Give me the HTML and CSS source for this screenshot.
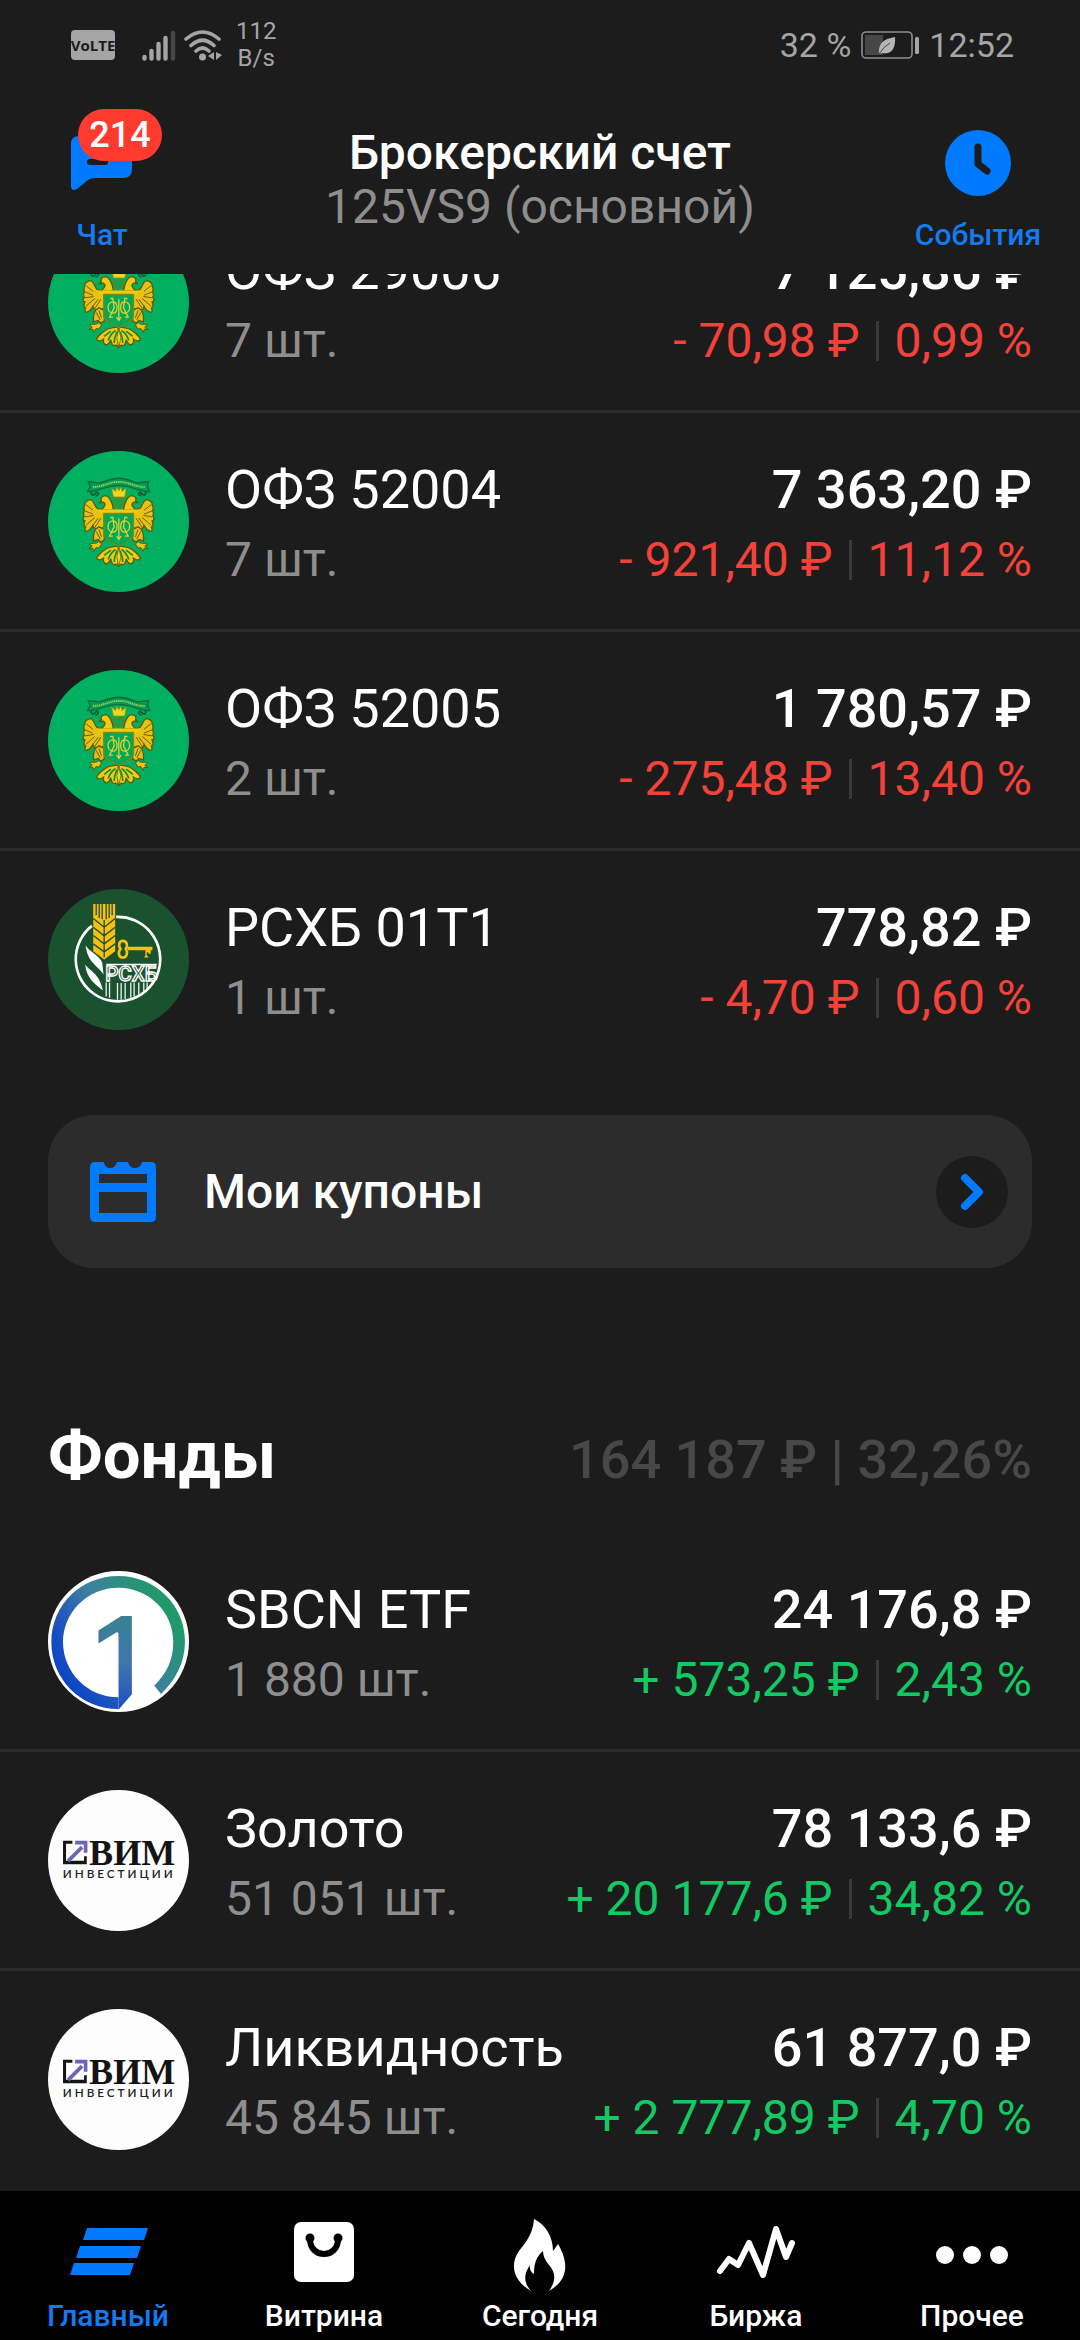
FILE: index.html
```html
<!DOCTYPE html>
<html lang="ru">
<head>
<meta charset="utf-8">
<meta name="viewport" content="width=device-width, initial-scale=1">
<title>Брокерский счет</title>
<link rel="stylesheet" href="styles.css">
</head>
<body>
<svg class="defs" aria-hidden="true">
  <defs>
    <linearGradient id="ring" x1="0.1" y1="0.8" x2="0.9" y2="0.25">
      <stop offset="0" stop-color="#0a45c4"/>
      <stop offset="0.25" stop-color="#2155bd"/>
      <stop offset="0.55" stop-color="#3d7fa0"/>
      <stop offset="1" stop-color="#1f9a68"/>
    </linearGradient>
    <linearGradient id="one" x1="0" y1="0" x2="0" y2="1">
      <stop offset="0" stop-color="#38828f"/>
      <stop offset="0.5" stop-color="#3e77ab"/>
      <stop offset="1" stop-color="#1c50c4"/>
    </linearGradient>
    <symbol id="wing" viewBox="0 0 540 540">
      <path d="M224 236C212 240 200 238 197 230C192 220 188 210 182 208C170 208 162 218 164 224C158 232 162 238 162 242C158 250 160 254 162 258C156 266 158 272 164 272C160 284 160 290 166 291C162 300 164 304 170 303C180 300 184 294 188 286C190 292 192 296 196 296C206 300 216 296 222 290V252Z" fill="#e8c212" stroke="#5a5a10" stroke-width="4"/>
      <path d="M168 224L188 240M164 242L188 252M164 260L190 256M166 286L194 262M180 296L204 264M194 292L212 264" stroke="#6a5c0e" stroke-width="3" fill="none"/>
      <path d="M206 290C192 296 188 312 190 332L204 328L212 336L222 330C224 314 222 308 222 298Z" fill="#e3bf18" stroke="#5a5a10" stroke-width="4"/>
      <path d="M198 304L210 326M206 298L214 320" stroke="#6a5c0e" stroke-width="3" fill="none"/>
      <path d="M206 334C198 344 186 336 178 342L186 348L176 356L188 354L190 364L198 352L206 354L214 342Z" fill="#e9c514" stroke="#5a5a10" stroke-width="3"/>
      <path d="M250 240C248 220 238 196 224 196C214 198 210 206 214 212L206 218L220 216C230 222 222 230 212 240Z" fill="#f2cb10" stroke="#5a5a10" stroke-width="4"/>
      <path d="M264 348C236 348 222 358 212 368C206 376 198 378 200 386C208 394 214 388 220 384C218 396 224 404 232 400C238 396 240 390 242 386C242 398 250 408 256 402L264 408Z" fill="#f2cb10" stroke="#5a5a10" stroke-width="4"/>
      <path d="M256 358C244 366 238 376 234 388M260 362C254 376 252 388 252 396M242 360L222 376" stroke="#0b8f45" stroke-width="5" fill="none"/>
      <path d="M186 182C180 188 184 196 190 194L200 186C208 188 204 196 196 198" stroke="#0d5a30" stroke-width="5" fill="none"/>
    </symbol>
    <symbol id="arms" viewBox="53 62 424 424">
      <rect x="53" y="62" width="424" height="424" fill="#00b060"/>
      <use href="#wing" width="540" height="540"/>
      <g transform="matrix(-1 0 0 1 530 0)"><use href="#wing" width="540" height="540"/></g>
      <path d="M174 154L206 158C230 152 244 144 266 144C288 144 302 152 324 158L356 154L352 166L358 184C326 186 308 166 266 166C224 166 204 186 172 184L180 168Z" fill="#079a50" stroke="#0b6a38" stroke-width="4"/>
      <path d="M188 171C224 168 236 155 266 155C296 155 308 168 344 171" stroke="#8fcf5f" stroke-width="6" stroke-dasharray="4 2" fill="none"/>
      <path d="M250 200L244 174L256 184L260 170L266 182L272 170L276 184L288 174L284 200Z" fill="#f6d51a" stroke="#a08a10" stroke-width="2"/>
      <path d="M252 206H280V220L266 234L252 220Z" fill="#0aa555" stroke="#7a7a10" stroke-width="4"/>
      <path d="M200 238H332L318 250H214Z" fill="#f2cb10"/>
      <path d="M221 250H310V316C310 330 284 336 266 350C248 336 221 330 221 316Z" fill="#00a859" stroke="#7a8a12" stroke-width="4"/>
      <path d="M250 272C228 270 228 306 250 306C264 304 264 274 250 272ZM282 272C304 270 304 306 282 306C268 304 268 274 282 272ZM240 262H248L252 290L238 318H248M292 262H284L280 290L294 318H284M266 264V328M259 318L266 328L273 318" stroke="#e2d02c" stroke-width="4" fill="none"/>
      <path d="M266 352L260 380L266 410L272 380Z" fill="#f6d51a" stroke="#5a5a10" stroke-width="2"/>
    </symbol>
    <symbol id="rshb" viewBox="53 57 424 424">
      <rect x="53" y="57" width="424" height="424" fill="#1a5230"/>
      <path d="M258 141A127 127 0 1 1 185 168" fill="none" stroke="#fff" stroke-width="8"/>
      <path d="M189 102H255V244L222 269L189 244Z" fill="#f9bf12"/>
      <path d="M198 102V136M207 102V144M216 102V148M228 102V148M237 102V144M246 102V136M222 150V262M189 146L222 172L255 146M189 172L222 198L255 172M189 197L222 222L255 197M189 222L222 246L255 222" fill="none" stroke="#1a5230" stroke-width="4"/>
      <path d="M166 226C176 246 204 252 216 278L220 314C206 290 172 280 166 226ZM165 284C178 304 208 310 218 362C196 344 168 326 165 284Z" fill="#fff"/>
      <path d="M278 213C266 213 264 228 271 237C262 248 266 263 278 263C290 263 294 248 287 237C294 228 290 213 278 213Z" fill="none" stroke="#f9bf12" stroke-width="8"/>
      <path d="M292 231H367V241H362V252H355V247H350V256L356 263H342L346 256V241H292Z" fill="#f9bf12"/>
      <text x="225" y="334" class="rshb-text">РСХБ</text>
      <path d="M228 338V380M238 338V384M262 340V390M273 340V390M285 340V388M302 338V384M312 338V380M326 338V374M341 338V364M351 338V356" stroke="#e9f1ec" stroke-width="4" fill="none"/>
      <path d="M228 284H380" stroke="#fff" stroke-width="4"/>
    </symbol>
    <symbol id="sbcn" viewBox="53 59 422 422">
      <rect x="53" y="59" width="422" height="422" fill="#fff"/>
      <path d="M264 74C373 74 463 160 463 270C463 334 434 386 391 427L371 402C406 368 428 328 428 271C428 180 353 109 264 109C172 109 98 182 98 272C98 362 172 437 264 437V472C150 472 63 382 63 272C63 160 152 74 264 74Z" fill="url(#ring)"/>
      <path d="M264 474V248Q264 240 256 244L204 276V237L272 194H304V428Z" fill="url(#one)"/>
    </symbol>
    <symbol id="vim" viewBox="53 59 422 422">
      <rect x="53" y="59" width="422" height="422" fill="#fdfdfd"/>
      <path d="M126 211H98V281H169V257H161V271H117L107 271V220H126Z" fill="#141414"/>
      <path d="M113 272L155 230" stroke="#6a68b4" stroke-width="11"/>
      <path d="M134 211H171V247H160V222H134Z" fill="#6a68b4"/>
      <text x="176" y="282" class="vim-text">ВИМ</text>
      <text x="97" y="322" class="vim-sub">ИНВЕСТИЦИИ</text>
    </symbol>
  </defs>
</svg>

<div class="top">
  <div class="status">
    <svg class="volte" viewBox="0 0 44 30" role="img" aria-label="VoLTE"><rect width="44" height="30" rx="4" fill="#a5a5a5"/><text x="22" y="21" class="volte-text">VoLTE</text></svg>
    <svg class="signal" viewBox="0 0 34 31" aria-hidden="true"><path d="M2.500 27V28.500M9.500 21V28.500M16.500 14V28.500M23.500 8V28.500" stroke="#a5a5a5" stroke-width="4.400" stroke-linecap="round"/><path d="M31 3V28.500" stroke="#474747" stroke-width="4.400" stroke-linecap="round"/></svg>
    <svg class="wifi" viewBox="0 0 38 31" aria-hidden="true"><g fill="none" stroke="#a5a5a5" stroke-width="3.600" stroke-linecap="round"><path d="M2 9Q18.500 -5 35 9M7 15.500Q18.500 5 30 15.500M12 21Q18.500 15 25 21"/></g><circle cx="18.500" cy="27" r="3.500" fill="#a5a5a5"/><path d="M30 22V30L24 26ZM32 22L38 25L32 30Z" fill="#a5a5a5"/></svg>
    <div class="speed">112<br>B/s</div>
    <span class="percent">32 %</span>
    <svg class="battery" viewBox="0 0 58 28" aria-hidden="true"><rect x="1" y="1" width="50" height="26" rx="4" fill="none" stroke="#8d8d8d" stroke-width="1.600"/><rect x="4" y="4" width="18" height="20" fill="#474747"/><rect x="54" y="6" width="4" height="17" rx="1.500" fill="#a5a5a5"/><path d="M18 23C17 13 22 8 34 6C35 18 30 24 21 22Z" fill="#b5b5b5"/><path d="M18 23Q23 15 29 12" stroke="#474747" fill="none"/></svg>
    <time>12:52</time>
  </div>
  <header class="header">
    <button class="action" type="button">
      <span class="action-icon">
        <svg viewBox="0 0 66 66" aria-hidden="true"><path d="M10 6H55Q63 6 63 14V39Q63 48 54 48H26Q22 48 19 50L8 59Q2 62 2 56V14Q2 6 10 6Z" fill="#007aff"/><path d="M21 32H36" stroke="#1c1c1c" stroke-width="6" stroke-linecap="round"/></svg>
        <span class="badge">214</span>
      </span>
      <span>Чат</span>
    </button>
    <div class="account">
      <h1>Брокерский счет</h1>
      <p>125VS9 (основной)</p>
    </div>
    <button class="action" type="button">
      <span class="action-icon">
        <svg viewBox="0 0 66 66" aria-hidden="true"><circle cx="33" cy="33" r="33" fill="#007aff"/><path d="M33 17V34L42 41" fill="none" stroke="#1c1c1c" stroke-width="7" stroke-linecap="round" stroke-linejoin="round"/></svg>
      </span>
      <span>События</span>
    </button>
  </header>
</div>

<main>
  <ul class="list bonds">
    <li class="row">
      <svg class="logo" aria-hidden="true"><use href="#arms"/></svg>
      <div class="info"><div class="name">ОФЗ 29006</div><div class="qty">7 шт.</div></div>
      <div class="sum"><div class="value">7 125,86 ₽</div><div class="change down"><span>- 70,98 ₽</span><i></i><span>0,99 %</span></div></div>
    </li>
    <li class="row">
      <svg class="logo" aria-hidden="true"><use href="#arms"/></svg>
      <div class="info"><div class="name">ОФЗ 52004</div><div class="qty">7 шт.</div></div>
      <div class="sum"><div class="value">7 363,20 ₽</div><div class="change down"><span>- 921,40 ₽</span><i></i><span>11,12 %</span></div></div>
    </li>
    <li class="row">
      <svg class="logo" aria-hidden="true"><use href="#arms"/></svg>
      <div class="info"><div class="name">ОФЗ 52005</div><div class="qty">2 шт.</div></div>
      <div class="sum"><div class="value">1 780,57 ₽</div><div class="change down"><span>- 275,48 ₽</span><i></i><span>13,40 %</span></div></div>
    </li>
    <li class="row">
      <svg class="logo" aria-hidden="true"><use href="#rshb"/></svg>
      <div class="info"><div class="name">РСХБ 01Т1</div><div class="qty">1 шт.</div></div>
      <div class="sum"><div class="value">778,82 ₽</div><div class="change down"><span>- 4,70 ₽</span><i></i><span>0,60 %</span></div></div>
    </li>
  </ul>

  <button class="coupons" type="button">
    <svg class="coupons-icon" viewBox="0 0 66 60" aria-hidden="true"><path fill-rule="evenodd" d="M5 0H14C15 8 25 8 27 0H38C40 8 50 8 52 0H61Q66 0 66 5V55Q66 60 61 60H5Q0 60 0 55V5Q0 0 5 0ZM9 12V21H57V12ZM9 30V51H57V30Z" fill="#007aff"/></svg>
    <span>Мои купоны</span>
    <svg class="chevron" viewBox="0 0 72 72" aria-hidden="true"><circle cx="36" cy="36" r="36" fill="#1c1c1c"/><path d="M29 22L43 36L29 50" fill="none" stroke="#007aff" stroke-width="8" stroke-linecap="round" stroke-linejoin="round"/></svg>
  </button>

  <div class="section-head">
    <h2>Фонды</h2>
    <span>164 187 ₽ | 32,26%</span>
  </div>

  <ul class="list">
    <li class="row">
      <svg class="logo" aria-hidden="true"><use href="#sbcn"/></svg>
      <div class="info"><div class="name">SBCN ETF</div><div class="qty">1 880 шт.</div></div>
      <div class="sum"><div class="value">24 176,8 ₽</div><div class="change up"><span>+ 573,25 ₽</span><i></i><span>2,43 %</span></div></div>
    </li>
    <li class="row">
      <svg class="logo" aria-hidden="true"><use href="#vim"/></svg>
      <div class="info"><div class="name">Золото</div><div class="qty">51 051 шт.</div></div>
      <div class="sum"><div class="value">78 133,6 ₽</div><div class="change up"><span>+ 20 177,6 ₽</span><i></i><span>34,82 %</span></div></div>
    </li>
    <li class="row">
      <svg class="logo" aria-hidden="true"><use href="#vim"/></svg>
      <div class="info"><div class="name">Ликвидность</div><div class="qty">45 845 шт.</div></div>
      <div class="sum"><div class="value">61 877,0 ₽</div><div class="change up"><span>+ 2 777,89 ₽</span><i></i><span>4,70 %</span></div></div>
    </li>
  </ul>
</main>

<nav class="tabs">
  <a href="#main" class="active"><svg viewBox="0 0 80 80" aria-hidden="true"><path d="M19 17H80L76 29H15ZM12 35H73L69 47H8ZM6 52H66L62 64H2Z" fill="#007aff"/></svg>Главный</a>
  <a href="#shop"><svg viewBox="0 0 80 80" aria-hidden="true"><rect x="10" y="11" width="60" height="60" rx="7" fill="#fff"/><path d="M26 28C26 48 54 48 54 28" fill="none" stroke="#000" stroke-width="6"/><circle cx="26" cy="27" r="4.500"/><circle cx="54" cy="27" r="4.500"/></svg>Витрина</a>
  <a href="#today"><svg viewBox="0 0 80 80" aria-hidden="true"><path d="M34 8C46 14 53 26 53 40L58 33C68 50 70 68 49 80C56 70 56 62 49 54C45 49 43 45 43 40C36 46 34 53 34 63Q29 60 30 54C23 64 24 72 31 80C14 70 9 54 19 40C27 30 33 22 34 8Z" fill="#fff"/></svg>Сегодня</a>
  <a href="#market"><svg viewBox="0 0 80 80" aria-hidden="true"><path d="M4 60L13 48L22 54L33 32L47 64L60 18L70 46L76 32" fill="none" stroke="#fff" stroke-width="6" stroke-linecap="round" stroke-linejoin="round"/></svg>Биржа</a>
  <a href="#more"><svg viewBox="0 0 80 80" aria-hidden="true"><g fill="#fff"><circle cx="13" cy="44" r="9"/><circle cx="40" cy="44" r="9"/><circle cx="67" cy="44" r="9"/></g></svg>Прочее</a>
</nav>
</body>
</html>
```
FILE: styles.css
```css
* { box-sizing: border-box; }

body {
  margin: 0;
  background: #1c1c1c;
  color: #fff;
  font-family: Roboto, "Noto Sans", sans-serif;
}

h1, h2, p, ul { margin: 0; padding: 0; }
ul { list-style: none; }
svg { display: block; flex: none; }
.defs { position: absolute; width: 0; height: 0; }

button {
  border: 0;
  padding: 0;
  background: none;
  color: inherit;
  font: inherit;
  cursor: pointer;
}

.top {
  position: sticky;
  top: 0;
  z-index: 2;
  background: #1c1c1c;
}

.status {
  display: flex;
  align-items: center;
  height: 90px;
  padding: 0 66px 0 71px;
  color: #a5a5a5;
  font-size: 34px;
}
.volte { width: 44px; height: 30px; }
.volte-text {
  font: 700 15px "Open Sans", sans-serif;
  text-anchor: middle;
  fill: #1c1c1c;
}
.signal { width: 34px; height: 31px; margin-left: 27px; }
.wifi { width: 38px; height: 31px; margin-left: 8px; }
.speed {
  margin-left: 14px;
  font-size: 24px;
  line-height: 27px;
  text-align: center;
}
.percent { margin-left: auto; }
.battery { width: 58px; height: 28px; margin: 0 10px; }

.header {
  display: grid;
  grid-template-columns: 204px 1fr 204px;
  align-items: start;
  height: 184px;
  padding-top: 40px;
}
.action {
  display: flex;
  flex-direction: column;
  align-items: center;
  gap: 20px;
  color: #147af0;
  font-size: 30px;
  font-weight: 500;
  line-height: 38px;
}
.action-icon { position: relative; }
.action-icon svg { width: 66px; height: 66px; }
.badge {
  position: absolute;
  top: -21px;
  left: 9px;
  width: 84px;
  height: 52px;
  border-radius: 26px;
  background: #ff3b30;
  color: #fff;
  font-size: 36px;
  line-height: 52px;
  text-align: center;
}
.account { margin-top: -4px; text-align: center; line-height: 54px; }
.account h1 { font-size: 48px; font-weight: 500; }
.account p { font-size: 48px; color: #8e8e8e; }

/* The bonds list opens scrolled part of the way through its first row. */
.bonds { overflow: hidden; }
.bonds .row:first-child { margin-top: -80px; }
.row {
  display: flex;
  align-items: center;
  padding: 34px 48px;
}
.row + .row { border-top: 3px solid #2c2c2c; }
.logo { width: 141px; height: 141px; border-radius: 50%; overflow: hidden; }
.info, .sum { padding-top: 8px; line-height: 70px; white-space: nowrap; }
.info { margin-left: 36px; }
.sum { margin-left: auto; text-align: right; }
.name, .value { font-size: 54px; }
.value { font-weight: 500; }
.qty, .change { font-size: 48px; }
.qty { color: #8e8e8e; }
.change {
  display: flex;
  align-items: center;
  justify-content: flex-end;
  gap: 16px;
}
.change i { width: 3px; height: 40px; background: #3a3a3a; }
.down { color: #f4423a; }
.up { color: #14c864; }

.rshb-text {
  font: 500 62px Roboto, sans-serif;
  fill: none;
  stroke: #fff;
  stroke-width: 4px;
}
.vim-text { font: 700 108px "Liberation Serif", serif; fill: #141414; }
.vim-sub {
  font: 600 35px Lato, sans-serif;
  letter-spacing: 9px;
  fill: #222;
}

.coupons {
  display: flex;
  align-items: center;
  width: calc(100% - 96px);
  height: 153px;
  margin: 48px 48px 0;
  padding: 0 24px 0 42px;
  border-radius: 46px;
  background: #2c2c2c;
  font-size: 48px;
  font-weight: 500;
}
.coupons-icon { width: 66px; height: 60px; }
.coupons span { margin-left: 48px; }
.chevron { width: 72px; height: 72px; margin-left: auto; }

.section-head {
  display: flex;
  align-items: baseline;
  justify-content: space-between;
  padding: 147px 48px 33px;
  line-height: 80px;
}
.section-head h2 { font-size: 67px; font-weight: 700; }
.section-head span { font-size: 54px; font-weight: 500; color: #484848; }

.tabs {
  position: sticky;
  bottom: 0;
  z-index: 2;
  display: grid;
  grid-template-columns: repeat(5, 1fr);
  height: 150px;
  margin-top: 4px;
  padding-top: 20px;
  background: #000;
}
.tabs a {
  display: flex;
  flex-direction: column;
  align-items: center;
  gap: 6px;
  color: #fff;
  font-size: 30px;
  font-weight: 500;
  line-height: 38px;
  text-decoration: none;
}
.tabs svg { width: 80px; height: 80px; }
.tabs .active { color: #147af0; }
```
